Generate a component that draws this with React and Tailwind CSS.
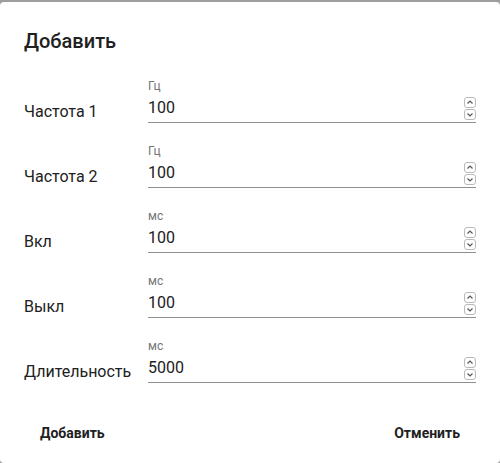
const fields = [
  { label: "Частота 1", unit: "Гц", value: "100" },
  { label: "Частота 2", unit: "Гц", value: "100" },
  { label: "Вкл", unit: "мс", value: "100" },
  { label: "Выкл", unit: "мс", value: "100" },
  { label: "Длительность", unit: "мс", value: "5000" },
];

function Spinner() {
  return (
    <div className="flex flex-col gap-[1px]">
      <svg width="12" height="11" viewBox="0 0 12 11">
        <rect x="0.5" y="0.5" width="11" height="10" rx="2.5" fill="#fff" stroke="#b9b9b9" />
        <path d="M3.5 6.5 L6 4 L8.5 6.5" fill="none" stroke="#555" strokeWidth="1.2" />
      </svg>
      <svg width="12" height="11" viewBox="0 0 12 11">
        <rect x="0.5" y="0.5" width="11" height="10" rx="2.5" fill="#fff" stroke="#b9b9b9" />
        <path d="M3.5 4.5 L6 7 L8.5 4.5" fill="none" stroke="#555" strokeWidth="1.2" />
      </svg>
    </div>
  );
}

export default function App() {
  return (
    <div className="w-[500px] h-[463px] bg-[#9e9e9e] pt-[2px] font-['Roboto','Liberation_Sans',sans-serif] text-[#212121] overflow-hidden">
      <div className="h-[461px] bg-white rounded-[4px] flex flex-col">
        {/* Title */}
        <h2 className="px-6 pt-[25px] text-[20px] leading-[28px] font-medium">Добавить</h2>

        {/* Fields */}
        <div className="px-6 pt-[24px] flex flex-col gap-[21px]">
          {fields.map((f) => (
            <div key={f.label} className="flex items-end">
              <div className="w-[124px] text-[16px] leading-[19px] pb-[2px]">{f.label}</div>
              <div className="flex-1 flex flex-col">
                <div className="text-[12px] leading-[14px] text-[#757575]">{f.unit}</div>
                <div className="mt-[4px] h-[26px] flex items-start border-b border-[#8f8f8f]">
                  <input
                    readOnly
                    value={f.value}
                    className="flex-1 min-w-0 h-[19px] mt-[1px] text-[16px] leading-[19px] outline-none bg-transparent"
                  />
                  <Spinner />
                </div>
              </div>
            </div>
          ))}
        </div>

        {/* Actions */}
        <div className="mt-auto flex justify-between px-6 pb-[12px]">
          <button className="h-9 px-4 text-[14px] font-bold">Добавить</button>
          <button className="h-9 px-4 text-[14px] font-bold">Отменить</button>
        </div>
      </div>
    </div>
  );
}
